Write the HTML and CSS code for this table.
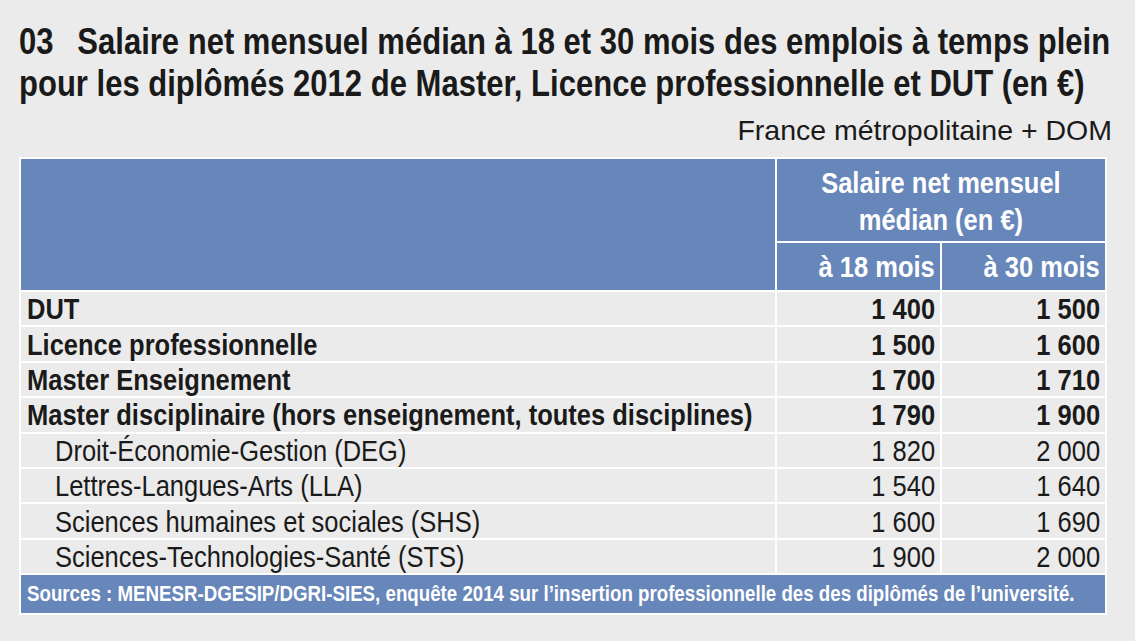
FILE: index.html
```html
<!DOCTYPE html>
<html lang="fr">
<head>
<meta charset="utf-8">
<title>Salaire net mensuel médian</title>
<link rel="stylesheet" href="styles.css">
</head>
<body>
<div class="page">
  <h1 class="title">
    <span class="tl"><span class="num">03</span>Salaire net mensuel médian à 18 et 30 mois des emplois à temps plein</span>
    <span class="tl">pour les diplômés 2012 de Master, Licence professionnelle et DUT (en €)</span>
  </h1>
  <div class="scope">France métropolitaine + DOM</div>
  <table class="data">
    <colgroup><col class="c1"><col class="c2"><col class="c3"></colgroup>
    <thead>
      <tr class="h1row"><th class="blank" rowspan="2"></th><th class="group" colspan="2"><span class="n nc">Salaire net mensuel<br>médian (en €)</span></th></tr>
      <tr class="h2row"><th class="sub"><span class="n nr">à 18 mois</span></th><th class="sub"><span class="n nr">à 30 mois</span></th></tr>
    </thead>
    <tbody>
      <tr class="main"><td class="lab"><span class="n">DUT</span></td><td class="val"><span class="n nr">1 400</span></td><td class="val"><span class="n nr">1 500</span></td></tr>
      <tr class="main"><td class="lab"><span class="n">Licence professionnelle</span></td><td class="val"><span class="n nr">1 500</span></td><td class="val"><span class="n nr">1 600</span></td></tr>
      <tr class="main"><td class="lab"><span class="n">Master Enseignement</span></td><td class="val"><span class="n nr">1 700</span></td><td class="val"><span class="n nr">1 710</span></td></tr>
      <tr class="main"><td class="lab"><span class="n">Master disciplinaire (hors enseignement, toutes disciplines)</span></td><td class="val"><span class="n nr">1 790</span></td><td class="val"><span class="n nr">1 900</span></td></tr>
      <tr class="minor"><td class="lab"><span class="n">Droit-Économie-Gestion (DEG)</span></td><td class="val"><span class="n nr">1 820</span></td><td class="val"><span class="n nr">2 000</span></td></tr>
      <tr class="minor"><td class="lab"><span class="n">Lettres-Langues-Arts (LLA)</span></td><td class="val"><span class="n nr">1 540</span></td><td class="val"><span class="n nr">1 640</span></td></tr>
      <tr class="minor"><td class="lab"><span class="n">Sciences humaines et sociales (SHS)</span></td><td class="val"><span class="n nr">1 600</span></td><td class="val"><span class="n nr">1 690</span></td></tr>
      <tr class="minor"><td class="lab"><span class="n">Sciences-Technologies-Santé (STS)</span></td><td class="val"><span class="n nr">1 900</span></td><td class="val"><span class="n nr">2 000</span></td></tr>
    </tbody>
    <tfoot>
      <tr><td class="src" colspan="3"><span class="n">Sources : MENESR-DGESIP/DGRI-SIES, enquête 2014 sur l’insertion professionnelle des des diplômés de l’université.</span></td></tr>
    </tfoot>
  </table>
</div>
</body>
</html>
```
FILE: styles.css
```css
html, body {
  margin: 0;
  padding: 0;
  background: #ebebeb;
  overflow: hidden;
}
body {
  font-family: "Liberation Sans", Arial, sans-serif;
  color: #191919;
}
.page {
  padding: 21px 23px 0 19px;
}
/* narrow (condensed) rendering of Arial-metric text */
.n, .tl {
  display: inline-block;
  white-space: nowrap;
  transform: scaleX(0.85);
  transform-origin: left center;
}
.nr { transform-origin: right center; }
.nc { transform-origin: center center; }

.title {
  margin: 0;
  font-size: 36.5px;
  line-height: 42px;
  font-weight: bold;
  color: #1a1a1a;
  overflow: hidden;
}
.tl { display: block; width: max-content; }
.num { margin-right: 28px; }
.scope {
  text-align: right;
  font-size: 28.5px;
  line-height: 32px;
  margin-top: 9px;
  color: #1a1a1a;
}
.data {
  margin-top: 11px;
  border-collapse: separate;
  border-spacing: 2px;
  background: #ffffff;
  width: 1088px;
  table-layout: fixed;
}
.c1 { width: 754px; }
.c2 { width: 163px; }
.c3 { width: 163px; }
th {
  background: #6786ba;
  color: #ffffff;
  font-weight: bold;
  padding: 0;
  font-size: 30px;
}
.h1row th.group {
  height: 80px;
  line-height: 37px;
  text-align: center;
  padding-top: 2px;
}
.h2row th {
  height: 46px;
  text-align: right;
  padding-right: 5px;
  padding-top: 1px;
}
td {
  background: #ebebeb;
  padding: 0;
  height: 33.4px;
  font-size: 30px;
  line-height: 33px;
  color: #1a1a1a;
}
.main td { font-weight: bold; }
.lab { padding-left: 6px; white-space: nowrap; }
.minor .lab { padding-left: 34px; }
.val { text-align: right; padding-right: 5px; }
.src {
  background: #6786ba;
  color: #ffffff;
  font-weight: bold;
  font-size: 22px;
  line-height: 24px;
  height: 38px;
  padding-left: 6px;
  white-space: nowrap;
  overflow: hidden;
}
```
